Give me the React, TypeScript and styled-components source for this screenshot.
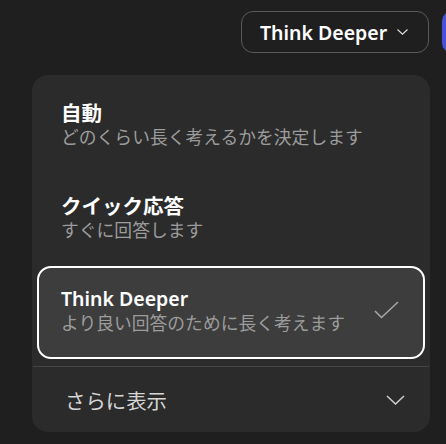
import React from "react";
import styled, { createGlobalStyle } from "styled-components";

const GlobalStyle = createGlobalStyle`
  body {
    margin: 0;
    background: #1f1f1f;
    overflow: hidden;
    font-family: "Noto Sans", "Noto Sans CJK JP", sans-serif;
  }
`;

const Page = styled.div`
  width: 446px;
  height: 444px;
  overflow: hidden;
  padding-top: 11px;
  box-sizing: border-box;
`;

const TopBar = styled.div`
  display: flex;
  align-items: center;
  gap: 13px;
  padding-left: 241px;
  white-space: nowrap;
`;

const ModeButton = styled.button`
  flex-shrink: 0;
  display: flex;
  align-items: center;
  gap: 10px;
  height: 42px;
  width: 188px;
  box-sizing: border-box;
  padding: 0 0 0 18px;
  background: transparent;
  border: 1px solid #5a5a5a;
  border-radius: 12px;
  color: #fff;
  font-family: inherit;
  font-size: 19.5px;
  font-weight: 600;
`;

const SendButton = styled.div`
  flex-shrink: 0;
  width: 42px;
  height: 42px;
  border-radius: 10px;
  background: #4653d6;
`;

const Panel = styled.div`
  margin: 22px 0 0 32px;
  width: 398px;
  height: 357px;
  box-sizing: border-box;
  padding: 5px 5px 0;
  background: #2b2b2b;
  border-radius: 16px;
  display: flex;
  flex-direction: column;
`;

const Option = styled.div<{ $selected?: boolean }>`
  height: 93px;
  box-sizing: border-box;
  padding: 19px 24px 0 22px;
  border: 2px solid ${(p) => (p.$selected ? "#ffffff" : "transparent")};
  border-radius: 14px;
  background: ${(p) => (p.$selected ? "#3d3d3d" : "transparent")};
  display: flex;
  align-items: flex-start;
  justify-content: space-between;
`;

const OptionText = styled.div`
  display: flex;
  flex-direction: column;
`;

const Title = styled.div<{ $latin?: boolean }>`
  color: #fff;
  font-size: ${(p) => (p.$latin ? "19.5px" : "20.5px")};
  font-weight: ${(p) => (p.$latin ? 600 : 700)};
  line-height: 24px;
`;

const Subtitle = styled.div`
  color: #9c9c9c;
  font-size: 17.8px;
  line-height: 24px;
`;

const Check = styled.svg`
  margin-top: 14px;
  flex-shrink: 0;
`;

const Divider = styled.div`
  height: 1px;
  background: #454545;
  margin: 7px -4px 0;
`;

const MoreRow = styled.div`
  flex: 1;
  display: flex;
  align-items: center;
  justify-content: space-between;
  padding: 0 20px 0 28px;
  color: #d6d6d6;
  font-size: 20.4px;
`;

const options = [
  { title: "自動", sub: "どのくらい長く考えるかを決定します" },
  { title: "クイック応答", sub: "すぐに回答します" },
  { title: "Think Deeper", sub: "より良い回答のために長く考えます", selected: true, latin: true },
];

const App = () => {
  return (
    <Page>
      <GlobalStyle />
      <TopBar>
        <ModeButton>
          Think Deeper
          <svg width="11" height="6" viewBox="0 0 11 6" fill="none">
            <path d="M0.5 0.5L5.5 5.2L10.5 0.5" stroke="#e0e0e0" strokeWidth="1.1" />
          </svg>
        </ModeButton>
        <SendButton />
      </TopBar>

      <Panel>
        {options.map((o) => (
          <Option key={o.title} $selected={o.selected}>
            <OptionText>
              <Title $latin={o.latin}>{o.title}</Title>
              <Subtitle>{o.sub}</Subtitle>
            </OptionText>
            {o.selected && (
              <Check width="25" height="18" viewBox="0 0 25 18" fill="none">
                <path d="M1 10L7.5 16.5L24 1" stroke="#a8a8a8" strokeWidth="1.5" />
              </Check>
            )}
          </Option>
        ))}
        <Divider />
        <MoreRow>
          さらに表示
          <svg width="19" height="10" viewBox="0 0 19 10" fill="none">
            <path d="M1 1L9.5 9L18 1" stroke="#d0d0d0" strokeWidth="1.5" />
          </svg>
        </MoreRow>
      </Panel>
    </Page>
  );
};

export default App;
